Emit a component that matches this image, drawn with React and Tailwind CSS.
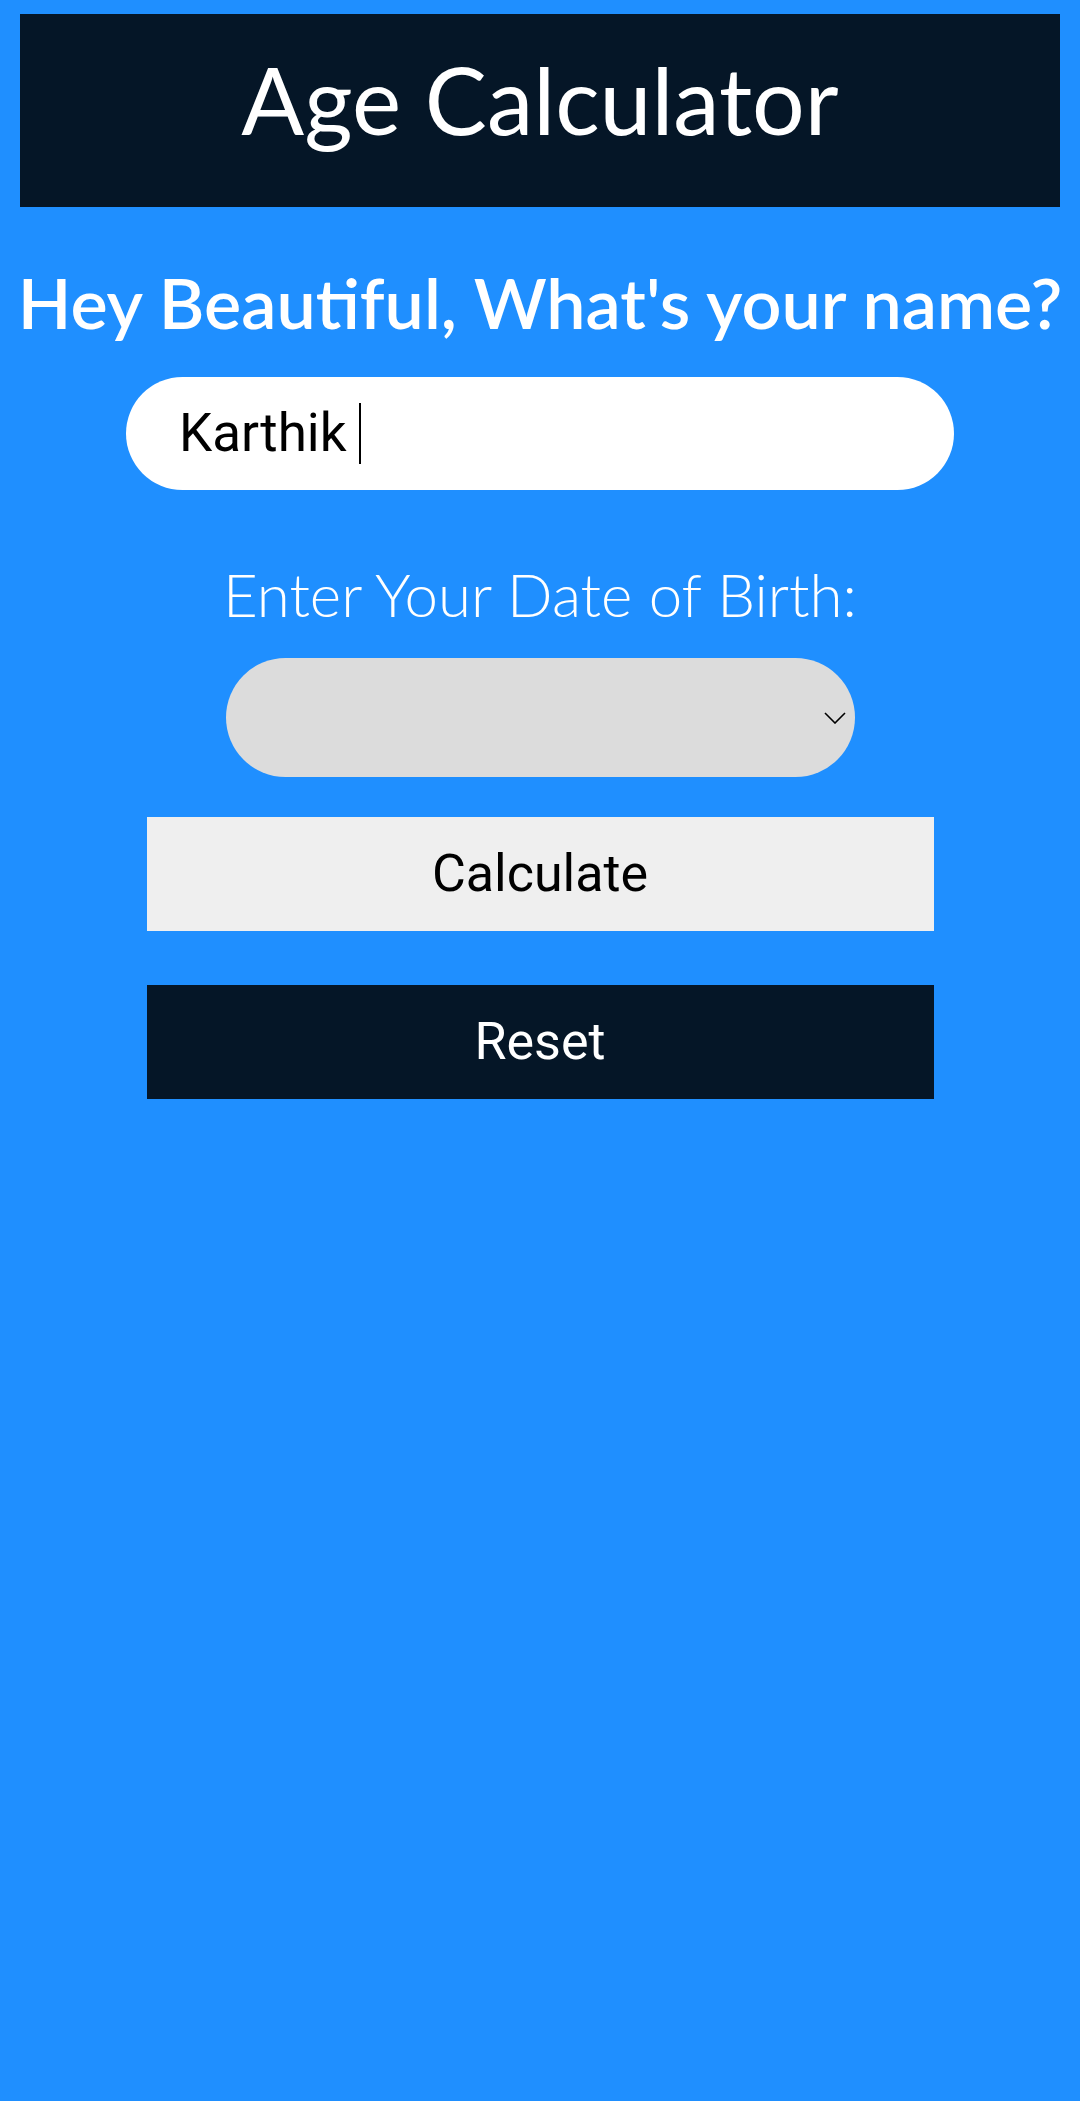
export default function App() {
  return (
    <div className="min-h-screen bg-[#1f8fff] flex flex-col items-center">
      {/* Title bar */}
      <header className="mt-[14px] w-[1040px] h-[193px] bg-[#051627] flex justify-center pt-[39px]">
        <h1 className="text-white text-[93px] leading-none font-normal font-['Lato',sans-serif]">Age Calculator</h1>
      </header>

      <h2 className="mt-[60px] text-white text-[70px] leading-none font-semibold font-['Lato',sans-serif] whitespace-nowrap">
        Hey Beautiful, What's your name?
      </h2>

      {/* Name field */}
      <div className="mt-[40px] w-[828px] h-[113px] rounded-full bg-white flex items-center pl-[53px]">
        <span className="text-black text-[53px] leading-none font-['Roboto',sans-serif]">Karthik</span>
        <span className="ml-[12px] w-[2px] h-[61px] bg-black" />
      </div>

      <p className="mt-[74px] text-white text-[60px] leading-none font-light font-['Lato',sans-serif]">
        Enter Your Date of Birth:
      </p>

      {/* Date picker */}
      <div className="mt-[34px] w-[629px] h-[119px] rounded-full bg-[#dcdcdc] flex items-center justify-end pr-[9px]">
        <svg width="22" height="12" viewBox="0 0 22 12" fill="none" stroke="black" strokeWidth="1.6">
          <polyline points="1,1 11,11 21,1" />
        </svg>
      </div>

      <button className="mt-[40px] w-[787px] h-[114px] bg-[#efefef] text-black text-[52px] font-['Roboto',sans-serif]">
        Calculate
      </button>

      <button className="mt-[54px] w-[787px] h-[114px] bg-[#051627] text-white text-[52px] font-['Roboto',sans-serif]">
        Reset
      </button>
    </div>
  )
}
